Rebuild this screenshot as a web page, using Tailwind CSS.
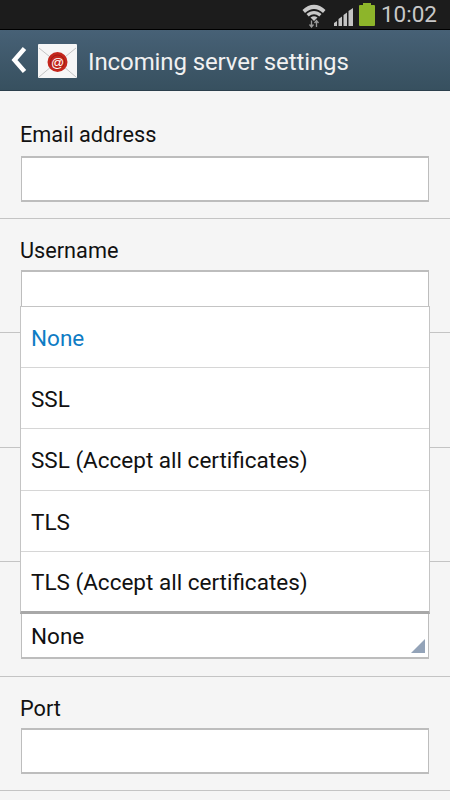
<!DOCTYPE html>
<html lang="en">
<head>
    <meta charset="UTF-8">
    <title>Incoming server settings</title>
    <script src="https://cdn.jsdelivr.net/npm/@tailwindcss/browser@4"></script>
</head>
<body class="relative w-[450px] h-[800px] overflow-hidden bg-[#f5f5f5] font-['Roboto',sans-serif]">

    <!-- status bar -->
    <div class="h-[30px] bg-[#1c1c1c] flex items-center justify-end pr-[13px] border-b border-[#000]">
        <svg width="26" height="26" viewBox="0 0 26 26" class="mr-[6px]">
            <path d="M1.500 8C8.500 1 17.500 1 24.500 8L22 11C16 5.500 10 5.500 4 11Z" fill="#c9c9c9"/>
            <path d="M5.500 12C10 8 16 8 20.500 12L18.300 14.500C14.500 11.500 11.500 11.500 7.700 14.500Z" fill="#c9c9c9"/>
            <path d="M9.500 15.500C12 13.800 14 13.800 16.500 15.500L13 19Z" fill="#c9c9c9"/>
            <path d="M10.500 18.500V25M8.500 22.500L10.500 25L12.500 22.500M15.500 25V18.500M13.500 21L15.500 18.500L17.500 21" stroke="#9a9a9a" stroke-width="1.300" fill="none"/>
        </svg>
        <svg width="21" height="18" viewBox="0 0 21 18" class="mr-[5px] mt-[5px]">
            <path d="M1 18V15L4 13V18ZM5.500 18V11L9 8.500V18ZM10.500 18V7L14 4.500V18ZM15.500 18V3L20 0V18Z" fill="#c4c4c4"/>
        </svg>
        <div class="flex flex-col items-center mr-[6px]">
            <div class="w-[8px] h-[2px] bg-[#8db52a]"></div>
            <div class="w-[16px] h-[21px] bg-[#8db52a] rounded-[1px]"></div>
        </div>
        <span class="text-[22.500px] leading-none text-[#c8c8c8]">10:02</span>
    </div>

    <!-- action bar -->
    <header class="h-[61px] bg-gradient-to-b from-[#476176] to-[#37505f] flex items-center border-b border-[#2c3f4c]">
        <svg width="16" height="26" viewBox="0 0 16 26" class="ml-[11px] mr-[11px]">
            <path d="M13.500 1.500L3.500 13L13.500 24.500" stroke="#fff" stroke-width="4.500" fill="none"/>
        </svg>
        <svg width="39" height="34" viewBox="0 0 39 34" class="mr-[11px] mt-[1px]">
            <rect width="39" height="34" rx="1" fill="#f6f6f6"/>
            <path d="M1 4L19.500 19L38 4M1 33L14 22M38 33L25 22" stroke="#c4c4c4" stroke-width="1" fill="none"/>
            <circle cx="19.500" cy="18" r="10" fill="#c4261c"/>
            <circle cx="19.500" cy="18" r="7" fill="none" stroke="#9f1c14" stroke-width="1"/>
            <text x="19.500" y="22.500" text-anchor="middle" font-size="13" fill="#fff" font-family="Liberation Sans">@</text>
        </svg>
        <h1 class="text-[24px] leading-none text-[#f1f1f1] mt-[3px] tracking-[-0.1px]">Incoming server settings</h1>
    </header>

    <main class="flex flex-col">
        <section class="h-[128px] pt-[32px] px-[20px] border-b border-[#c4c4c4]">
            <label class="block text-[21.700px] leading-[24px] text-[#111]">Email address</label>
            <div class="mt-[9px] ml-[1px] h-[46px] w-[408px] bg-white border border-[#bdbdbd] border-t-2 border-b-2"></div>
        </section>
        <section class="h-[114.450px] pt-[20px] px-[20px] border-b border-[#c4c4c4]">
            <label class="block text-[21.700px] leading-[24px] text-[#111]">Username</label>
            <div class="mt-[7px] ml-[1px] h-[46px] w-[408px] bg-white border border-[#bdbdbd] border-t-2 border-b-2"></div>
        </section>
        <!-- these two sit fully behind the open dropdown -->
        <section class="h-[114.450px] pt-[20px] px-[20px] border-b border-[#c4c4c4]">
            <div class="h-[24px]"></div>
            <div class="mt-[7px] ml-[1px] h-[46px] w-[408px] bg-white border border-[#bdbdbd] border-t-2 border-b-2"></div>
        </section>
        <section class="h-[114.450px] pt-[20px] px-[20px] border-b border-[#c4c4c4]">
            <div class="h-[24px]"></div>
            <div class="mt-[7px] ml-[1px] h-[46px] w-[408px] bg-white border border-[#bdbdbd] border-t-2 border-b-2"></div>
        </section>
        <section class="h-[114.450px] pt-[20px] px-[20px] border-b border-[#c4c4c4]">
            <div class="h-[24px]"></div>
            <div class="relative mt-[7px] ml-[1px] h-[46px] w-[408px] bg-white border border-[#bdbdbd] border-b-2 flex items-center pl-[9px] pt-[3px] text-[22.500px] text-[#111]">
                None
                <svg width="14" height="14" viewBox="0 0 14 14" class="absolute right-[3px] bottom-[4px]"><path d="M14 0V14H0Z" fill="#93a3b8"/></svg>
            </div>
        </section>
        <section class="h-[114.450px] pt-[20px] px-[20px] border-b border-[#c4c4c4]">
            <label class="block text-[21.700px] leading-[24px] text-[#111]">Port</label>
            <div class="mt-[7px] ml-[1px] h-[46px] w-[408px] bg-white border border-[#bdbdbd] border-t-2 border-b-2"></div>
        </section>
    </main>

    <!-- security type dropdown -->
    <ul class="absolute left-[20px] top-[306px] w-[410px] h-[308px] bg-white border border-[#c4c4c4] border-b-[3px] border-b-[#a8a8a8] text-[22.500px] text-[#111] flex flex-col">
        <li class="h-[61px] shrink-0 flex items-center pl-[10px] pt-[3px] border-b border-[#d6d6d6] text-[#0f7cc4]">None</li>
        <li class="h-[61px] shrink-0 flex items-center pl-[10px] pt-[3px] border-b border-[#d6d6d6]">SSL</li>
        <li class="h-[62px] shrink-0 flex items-center pl-[10px] pt-[3px] border-b border-[#d6d6d6]">SSL (Accept all certificates)</li>
        <li class="h-[61px] shrink-0 flex items-center pl-[10px] pt-[3px] border-b border-[#d6d6d6]">TLS</li>
        <li class="flex-1 flex items-center pl-[10px] pt-[3px]">TLS (Accept all certificates)</li>
    </ul>

</body>
</html>
